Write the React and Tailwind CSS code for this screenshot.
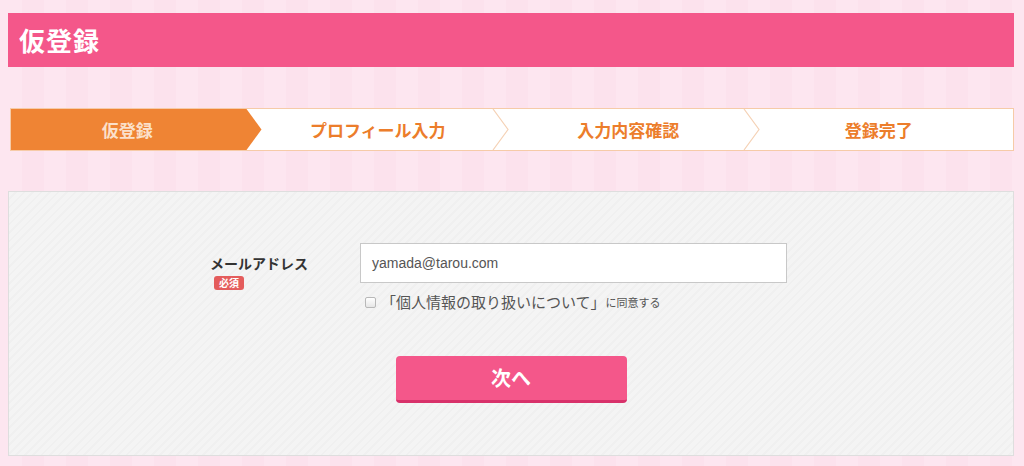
import React from "react";

const jp = { fontFamily: '"Noto Sans CJK JP", "Noto Sans", sans-serif' };

function Chevron() {
  return (
    <svg className="absolute right-[2px] top-0 h-full w-[18px]" viewBox="0 0 18 41" preserveAspectRatio="none">
      <polyline points="1,0 16,20.5 1,41" fill="none" stroke="#f5d2b6" strokeWidth="1.2" />
    </svg>
  );
}

export default function App() {
  const steps = ["仮登録", "プロフィール入力", "入力内容確認", "登録完了"];
  return (
    <div
      className="w-[1024px] h-[466px] overflow-hidden bg-[#fde5ef] bg-[repeating-linear-gradient(90deg,#fde6f0_0px,#fde6f0_22px,#fce2ed_22px,#fce2ed_44px)] pt-[13px] px-[8px]"
      style={jp}
    >
      {/* Header */}
      <div className="h-[54px] w-[1006px] bg-[#f4578a] flex items-center pl-[11px]">
        <h1 className="text-white text-[26px] font-bold leading-none tracking-[1px]">仮登録</h1>
      </div>

      {/* Steps */}
      <div className="mt-[41px] ml-[2px] w-[1004px] h-[43px] border border-[#f6cba8] bg-white flex">
        {steps.map((s, i) => (
          <div key={s} className="relative flex-1 h-full">
            {i === 0 && (
              <div className="absolute inset-0 bg-[#ef8434] [clip-path:polygon(0_0,calc(100%-15px)_0,100%_50%,calc(100%-15px)_100%,0_100%)]" />
            )}
            {(i === 1 || i === 2) && <Chevron />}
            <div
              className={
                "relative h-full flex items-center justify-center pr-[18px] text-[17px] font-bold " +
                (i === 0 ? "text-[#fbe0ca]" : "text-[#ec7d2b]")
              }
            >
              {s}
            </div>
          </div>
        ))}
      </div>

      {/* Form panel */}
      <div className="mt-[40px] w-[1006px] h-[265px] border border-[#dedede] bg-[#f3f3f3] bg-[repeating-linear-gradient(135deg,#f4f4f4_0px,#f4f4f4_4px,#f0f0f0_4px,#f0f0f0_6px)] pt-[51px]">
        <div className="flex pl-[201px]">
          <div className="w-[150px] pt-[12px]">
            <div className="text-[14px] font-bold text-[#333] leading-[16px]">メールアドレス</div>
            <div className="mt-[5px] ml-[4px] w-[30px] h-[14px] rounded-[3px] bg-[#e45c5c] text-white text-[10px] font-bold leading-[14px] text-center">
              必須
            </div>
          </div>
          <div>
            <div className="w-[427px] h-[40px] bg-white border border-[#c8c8c8] flex items-center pl-[11px] text-[14px] text-[#555]" style={{ fontFamily: '"Liberation Sans", Arial, sans-serif' }}>
              yamada@tarou.com
            </div>
            <div className="mt-[10px] flex items-center text-[#555]">
              <span className="ml-[5px] w-[11px] h-[11px] rounded-[2px] border border-[#b8b8b8] bg-[linear-gradient(#ffffff,#e6e6e6)]" />
              <span className="ml-[5px] text-[15px] leading-[18px]">「個人情報の取り扱いについて」</span>
              <span className="text-[11px] leading-[18px]">に同意する</span>
            </div>
          </div>
        </div>
        <div className="mt-[45px] flex justify-center">
          <button className="w-[231px] h-[47px] rounded-[4px] bg-[#f4578a] border-b-[3px] border-[#d8316a] text-white text-[20px] font-bold flex items-center justify-center">
            次へ
          </button>
        </div>
      </div>
    </div>
  );
}
